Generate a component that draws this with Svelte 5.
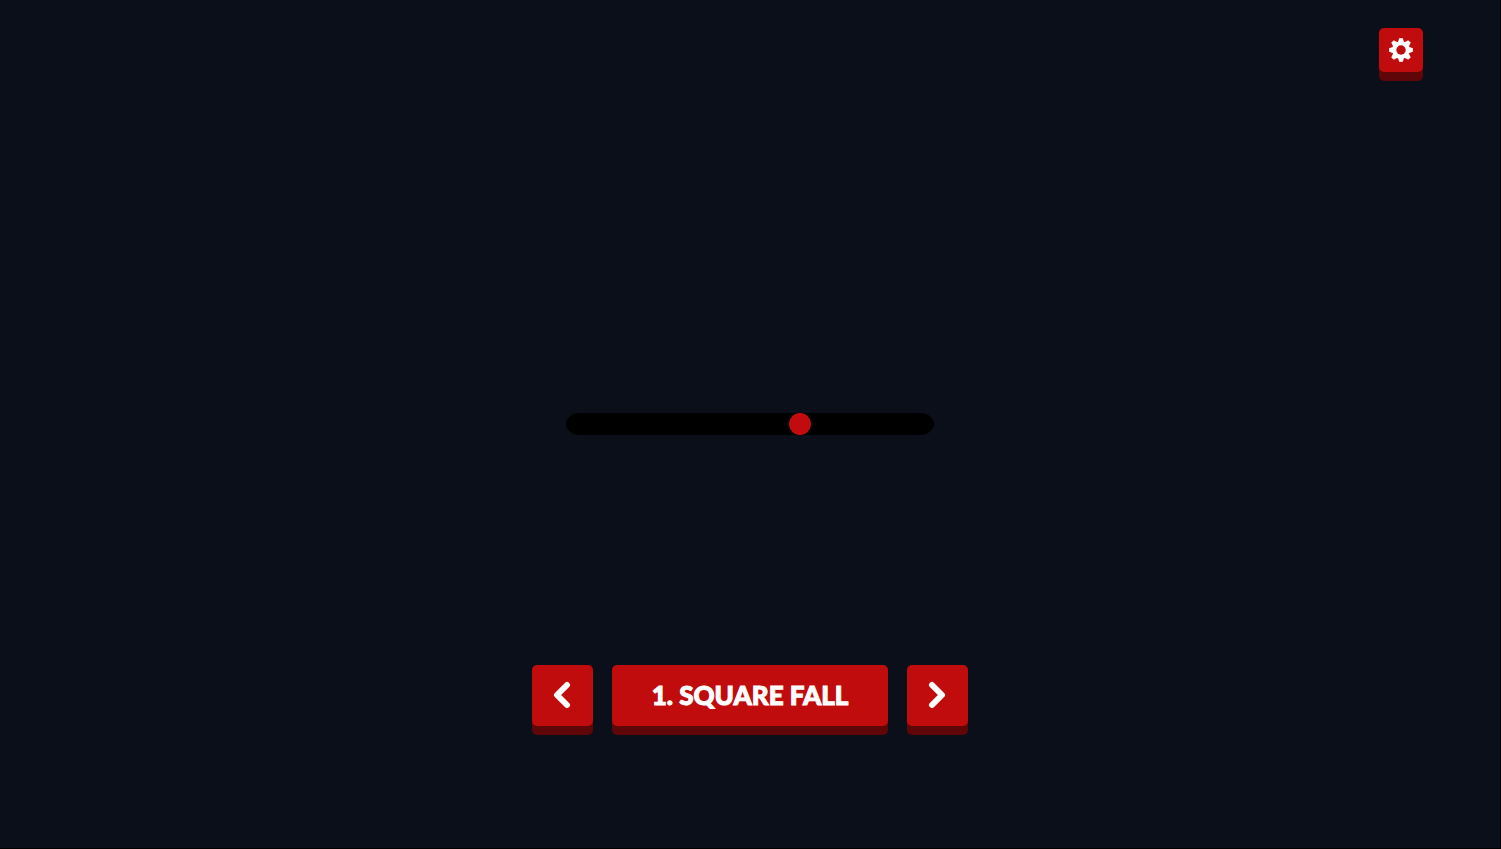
<script lang="ts">
	const levels = ['SQUARE FALL']

	let level = $state(0)
	let progress = $state(645)

	function step(by: number) {
		level = (level + by + levels.length) % levels.length
	}
</script>

<main>
	<header>
		<button class="small" aria-label="Settings">
			<svg viewBox="0 0 24 24" width="24" height="24">
				<g fill="currentColor">
					{#each [0, 45, 90, 135] as angle}
						<path
							d="M10.6 0.2 H13.4 L15.4 6 V18 L13.4 23.8 H10.6 L8.6 18 V6 Z"
							stroke="currentColor"
							stroke-width="0.6"
							stroke-linejoin="round"
							transform={`rotate(${angle} 12 12)`}
						/>
					{/each}
					<circle cx="12" cy="12" r="8.8" />
				</g>
				<circle class="hole" cx="12" cy="12" r="4.7" />
			</svg>
		</button>
	</header>

	<section>
		<input type="range" min="0" max="1000" bind:value={progress} aria-label="Progress" />
	</section>

	<nav>
		<button class="arrow" aria-label="Previous level" onclick={() => step(-1)}>
			<svg viewBox="0 0 19 29" width="19" height="29">
				<path d="M14 4 L4 14 L14 24" />
			</svg>
		</button>
		<button class="level">{level + 1}. {levels[level]}</button>
		<button class="arrow" aria-label="Next level" onclick={() => step(1)}>
			<svg viewBox="0 0 19 29" width="19" height="29">
				<path d="M4 4 L14 14 L4 24" />
			</svg>
		</button>
	</nav>
</main>

<style>
	:global(body) {
		background: #0a0f19;
	}

	main {
		box-sizing: border-box;
		min-height: 100vh;
		display: grid;
		grid-template-rows: 1fr auto 1fr;
		border-right: 1px solid #000;
		border-bottom: 1px solid #000;
	}

	header {
		display: flex;
		justify-content: flex-end;
		align-items: flex-start;
		padding: 28px 77px 0;
	}

	section {
		display: flex;
		justify-content: center;
	}

	nav {
		display: flex;
		justify-content: center;
		align-items: flex-end;
		gap: 19px;
		padding-bottom: 122px;
	}

	button {
		display: flex;
		justify-content: center;
		align-items: center;
		padding: 0;
		border: none;
		border-radius: 5px;
		background: #c00c0c;
		box-shadow: 0 9px 0 #5f0609;
		color: #fff;
		cursor: pointer;
	}

	.small {
		width: 44px;
		height: 44px;
	}

	.arrow {
		width: 61px;
		height: 61px;
	}

	.level {
		width: 276px;
		height: 61px;
		padding-bottom: 2px;
		font: 900 26px/32px 'Lato', sans-serif;
		-webkit-text-stroke: 1px currentColor;
		white-space: nowrap;
	}

	.arrow path {
		fill: none;
		stroke: currentColor;
		stroke-width: 6;
		stroke-linecap: round;
		stroke-linejoin: round;
	}

	.hole {
		fill: #c00c0c;
	}

	input {
		appearance: none;
		width: 368px;
		height: 22px;
		margin: 0;
		border-radius: 14px / 11px;
		background: #000;
		cursor: pointer;
	}

	input::-webkit-slider-thumb {
		appearance: none;
		width: 22px;
		height: 22px;
		border: none;
		border-radius: 50%;
		background: #c00c0c;
	}

	input::-moz-range-thumb {
		width: 22px;
		height: 22px;
		border: none;
		border-radius: 50%;
		background: #c00c0c;
	}
</style>
